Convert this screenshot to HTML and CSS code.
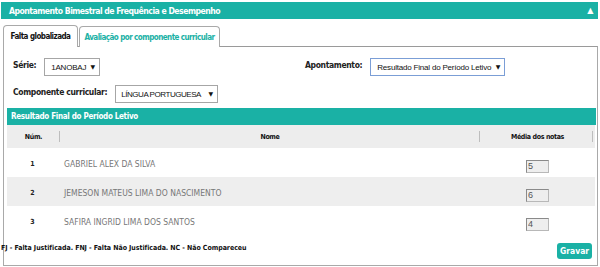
FILE: index.html
```html
<!DOCTYPE html>
<html lang="pt-BR">
<head>
    <meta charset="UTF-8">
    <title>Apontamento Bimestral</title>
    <link rel="stylesheet" href="styles.css">
</head>
<body>
    <div class="panel">
        <div class="panel-head">
            <span>Apontamento Bimestral de Frequência e Desempenho</span>
            <span class="toggle">&#9650;</span>
        </div>

        <div class="tabs">
            <a href="#" class="tab active">Falta globalizada</a>
            <a href="#" class="tab">Avaliação por componente curricular</a>
        </div>

        <div class="tab-body">
            <div class="filters">
                <div class="field">
                    <label for="serie">Série:</label>
                    <span class="sel-wrap">
                        <select id="serie" class="sel sel-serie"><option>1ANOBAJ</option></select>
                    </span>
                </div>
                <div class="field">
                    <label for="apont">Apontamento:</label>
                    <span class="sel-wrap">
                        <select id="apont" class="sel sel-apont focus"><option>Resultado Final do Período Letivo</option></select>
                    </span>
                </div>
            </div>
            <div class="filters">
                <div class="field">
                    <label for="comp">Componente curricular:</label>
                    <span class="sel-wrap">
                        <select id="comp" class="sel sel-comp"><option>LÍNGUA PORTUGUESA</option></select>
                    </span>
                </div>
            </div>

            <div class="section-head">Resultado Final do Período Letivo</div>
            <table class="grid">
                <thead>
                    <tr>
                        <th class="col-num"><span>Núm.</span></th>
                        <th class="col-name"><span>Nome</span></th>
                        <th class="col-avg"><span>Média dos notas</span></th>
                    </tr>
                </thead>
                <tbody>
                    <tr>
                        <td class="col-num">1</td>
                        <td class="col-name">GABRIEL ALEX DA SILVA</td>
                        <td class="col-avg"><input type="text" value="5"></td>
                    </tr>
                    <tr class="odd">
                        <td class="col-num">2</td>
                        <td class="col-name">JEMESON MATEUS LIMA DO NASCIMENTO</td>
                        <td class="col-avg"><input type="text" value="6"></td>
                    </tr>
                    <tr>
                        <td class="col-num">3</td>
                        <td class="col-name">SAFIRA INGRID LIMA DOS SANTOS</td>
                        <td class="col-avg"><input type="text" value="4"></td>
                    </tr>
                </tbody>
            </table>

            <div class="footer">
                <p class="legend">FJ - Falta Justificada. FNJ - Falta Não Justificada. NC - Não Compareceu</p>
                <button type="button" class="save-btn">Gravar</button>
            </div>
        </div>
    </div>
</body>
</html>
```

FILE: styles.css
```css
:root {
    --teal: #1ab1a5;
    --line: #a9a9a9;
    --text: #222222;
}

* {
    margin: 0;
    padding: 0;
    box-sizing: border-box;
}

body {
    width: 600px;
    height: 267px;
    overflow: hidden;
    background: #ffffff;
    color: var(--text);
    font-family: "DejaVu Sans Condensed", "Liberation Sans", sans-serif;
}

.panel {
    padding: 2px 2px 0 1px;
}

.panel-head {
    height: 17px;
    background: var(--teal);
    color: #ffffff;
    display: flex;
    align-items: center;
    justify-content: space-between;
    padding: 0 5px 0 8px;
    font-size: 8.6px;
    letter-spacing: -0.5px;
    font-weight: bold;
}

.toggle {
    font-size: 8px;
    font-family: "DejaVu Sans", sans-serif;
}

.tabs {
    display: flex;
    gap: 1px;
    margin-top: 6px;
    padding-left: 2px;
    position: relative;
    z-index: 1;
}

.tab {
    display: flex;
    align-items: center;
    justify-content: center;
    white-space: nowrap;
    border: 1px solid var(--line);
    border-bottom: none;
    border-radius: 4px 4px 0 0;
    background: #ffffff;
    color: var(--teal);
    font-size: 8px;
    letter-spacing: -0.55px;
    font-weight: bold;
    text-decoration: none;
}

.tab.active {
    width: 75px;
    height: 22px;
    color: #111111;
}

.tab:not(.active) {
    width: 141px;
    height: 21px;
    margin-top: 1px;
}

.tab-body {
    margin: -1px 0 0 2px;
    height: 220px;
    border: 1px solid var(--line);
    border-top-color: #9a9a9a;
    display: flex;
    flex-direction: column;
}

.filters {
    display: flex;
    padding-left: 9px;
}

.filters:first-child {
    margin-top: 11px;
}

.filters + .filters {
    margin-top: 9px;
}

.field {
    width: 293px;
    display: flex;
    align-items: flex-start;
    gap: 8px;
}

.field label {
    font-size: 8.5px;
    letter-spacing: -0.35px;
    font-weight: bold;
    padding-top: 2px;
}

.sel-wrap {
    position: relative;
    display: inline-block;
    height: 18px;
}

.sel-wrap::after {
    content: "\25BC";
    position: absolute;
    right: 5px;
    top: 5px;
    font-family: "DejaVu Sans", sans-serif;
    font-size: 6px;
    color: #111111;
    pointer-events: none;
}

.sel {
    appearance: none;
    -webkit-appearance: none;
    display: block;
    height: 18px;
    border: 1px solid #a6a6a6;
    border-radius: 0;
    background: #ffffff;
    font-family: "Liberation Sans", Arial, sans-serif;
    font-size: 8px;
    letter-spacing: -0.2px;
    color: #111111;
    padding: 0 12px 0 6px;
}

.sel-serie {
    width: 56px;
}

.sel-apont {
    width: 135px;
}

.sel-comp {
    width: 103px;
    padding-left: 5px;
    letter-spacing: -0.45px;
}

.sel.focus {
    border-color: #7b9ed6;
}

.section-head {
    margin: 5px 1px 0 3px;
    height: 17px;
    background: var(--teal);
    color: #ffffff;
    font-size: 8px;
    letter-spacing: -0.3px;
    font-weight: bold;
    display: flex;
    align-items: center;
    padding-left: 4px;
}

.grid {
    margin: 0 1px 0 3px;
    width: 588px;
    border-collapse: collapse;
    table-layout: fixed;
}

.grid th {
    height: 23px;
    background: #ededed;
    font-size: 7px;
    letter-spacing: -0.35px;
    font-weight: bold;
    color: #111111;
    position: relative;
}

.grid th::after {
    content: "";
    position: absolute;
    right: 0;
    top: 6px;
    height: 11px;
    border-right: 1px solid #bdbdbd;
}

.grid .col-num {
    width: 53px;
    text-align: center;
}

.grid .col-name {
    width: 420px;
}

.grid .col-avg {
    text-align: center;
}

.grid th.col-avg::after {
    right: 2px;
}

.grid td {
    height: 29px;
    padding-top: 2px;
}

.grid td.col-num {
    font-size: 7px;
    font-weight: bold;
    padding-right: 2px;
}

.grid td.col-name {
    padding-left: 4px;
    font-size: 8.5px;
    color: #777777;
}

.grid tr.odd td {
    background: #eeeeee;
}

.grid input {
    width: 23px;
    height: 13px;
    border: 1px solid #b8b8b8;
    border-top-color: #8a8a8a;
    border-left-color: #8a8a8a;
    background: #eeeeee;
    font-family: "Liberation Sans", Arial, sans-serif;
    font-size: 9px;
    color: #555555;
    padding-left: 1px;
}

.footer {
    margin-top: auto;
    display: flex;
    align-items: center;
    justify-content: space-between;
    padding: 0 5px 6px 0;
}

.legend {
    margin-left: -3px;
    font-size: 7px;
    letter-spacing: -0.05px;
    font-weight: bold;
    color: #111111;
    padding-bottom: 6px;
}

.save-btn {
    width: 35px;
    height: 16px;
    border: none;
    border-radius: 3px;
    background: var(--teal);
    color: #ffffff;
    font-family: inherit;
    font-size: 8.5px;
    font-weight: bold;
    cursor: pointer;
}
```
